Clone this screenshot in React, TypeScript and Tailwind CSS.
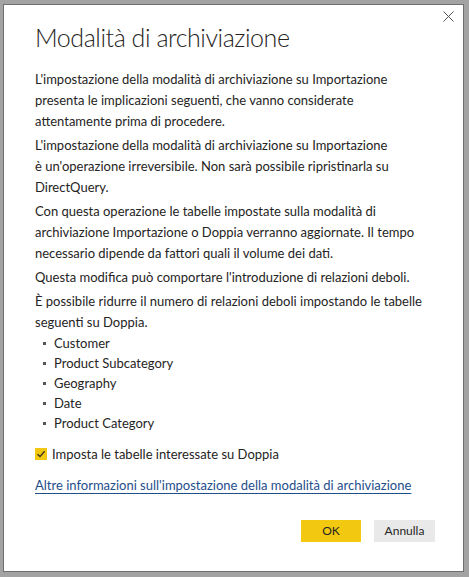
import React from "react";

const paras: string[][] = [
  [
    "L'impostazione della modalità di archiviazione su Importazione",
    "presenta le implicazioni seguenti, che vanno considerate",
    "attentamente prima di procedere.",
  ],
  [
    "L'impostazione della modalità di archiviazione su Importazione",
    "è un'operazione irreversibile. Non sarà possibile ripristinarla su",
    "DirectQuery.",
  ],
  [
    "Con questa operazione le tabelle impostate sulla modalità di",
    "archiviazione Importazione o Doppia verranno aggiornate. Il tempo",
    "necessario dipende da fattori quali il volume dei dati.",
  ],
  ["Questa modifica può comportare l'introduzione di relazioni deboli."],
];

export default function App() {
  const items = ["Customer", "Product Subcategory", "Geography", "Date", "Product Category"];
  return (
    <div className="w-[469px] h-[577px] bg-[#a3a3a3] pl-[3px] pt-[4px] pr-[5px] pb-[5px]">
      <div
        className="relative w-[461px] h-[568px] bg-white border border-[#6f6f6f] text-[#252423] pl-[31px] pr-[20px] pt-[16px]"
        style={{ fontFamily: 'Lato, "Open Sans", sans-serif' }}
      >
        <svg className="absolute left-[439px] top-[6px]" width="11" height="11" viewBox="0 0 11 11">
          <path d="M0.5 0.5 L10.5 10.5 M10.5 0.5 L0.5 10.5" stroke="#555" strokeWidth="1" fill="none" />
        </svg>
        <h1 className="text-[25px] leading-[32px] font-light tracking-[-0.45px]">Modalità di archiviazione</h1>
        <div className="mt-[16px] text-[13px] leading-[21px] flex flex-col gap-[3px] whitespace-nowrap">
          {paras.map((lines, i) => (
            <p key={i}>
              {lines.map((l, j) => (
                <span key={j} className="block">
                  {l}
                </span>
              ))}
            </p>
          ))}
          <div>
            <p>
              <span className="block">È possibile ridurre il numero di relazioni deboli impostando le tabelle</span>
              <span className="block">seguenti su Doppia.</span>
            </p>
            <ul>
              {items.map((it) => (
                <li key={it} className="flex items-center h-[20px]">
                  <span className="w-[3px] h-[3px] bg-[#555] ml-[8px] mr-[8px]" />
                  <span>{it}</span>
                </li>
              ))}
            </ul>
          </div>
        </div>
        <label className="mt-[11px] flex items-center text-[13px] leading-[20px]">
          <span className="w-[12px] h-[12px] bg-[#f2c811] flex items-center justify-center mr-[5px]">
            <svg width="10" height="10" viewBox="0 0 10 10">
              <path d="M1.5 5.2 L4 7.6 L8.6 2.2" stroke="#3a3320" strokeWidth="1.4" fill="none" />
            </svg>
          </span>
          Imposta le tabelle interessate su Doppia
        </label>
        <a className="mt-[11px] block text-[13px] leading-[20px] text-[#1e4e8c] underline decoration-[#1e4e8c] underline-offset-[3px]">
          Altre informazioni sull'impostazione della modalità di archiviazione
        </a>
        <div className="mt-[25px] flex justify-end gap-[13px] pr-[8px]">
          <button className="w-[60px] h-[22px] bg-[#f2c811] text-[12px] text-[#252423]">OK</button>
          <button className="w-[61px] h-[22px] bg-[#e9e9e9] text-[12px] text-[#252423]">Annulla</button>
        </div>
      </div>
    </div>
  );
}
